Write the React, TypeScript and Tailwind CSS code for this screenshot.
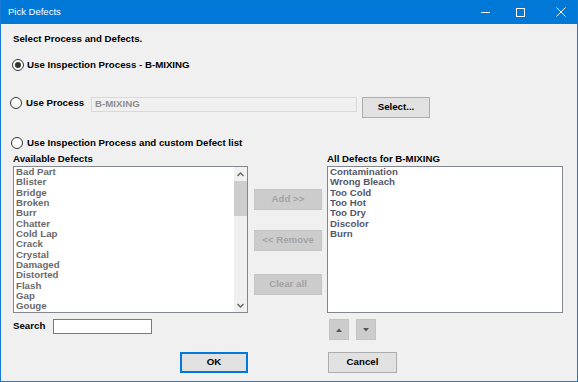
import { useState } from "react";

const AVAILABLE = [
  "Bad Part", "Blister", "Bridge", "Broken", "Burr", "Chatter", "Cold Lap",
  "Crack", "Crystal", "Damaged", "Distorted", "Flash", "Gap", "Gouge",
];

const SELECTED = ["Contamination", "Wrong Bleach", "Too Cold", "Too Hot", "Too Dry", "Discolor", "Burn"];

function Radio({ checked }: { checked?: boolean }) {
  return (
    <span className="flex h-[12px] w-[12px] shrink-0 items-center justify-center rounded-full border border-[#333] bg-white">
      {checked && <span className="h-[6px] w-[6px] rounded-full bg-[#333]" />}
    </span>
  );
}

function Btn({ label, className = "" }: { label: string; className?: string }) {
  return (
    <div className={`flex h-[21px] items-center justify-center border border-[#adadad] bg-[#e1e1e1] text-black ${className}`}>
      {label}
    </div>
  );
}

function DisabledBtn({ label }: { label: string }) {
  return (
    <div className="flex h-[21px] w-[68px] items-center justify-center border border-[#c4c4c4] bg-[#cccccc] text-[#a3a3a3]">
      {label}
    </div>
  );
}

export default function App() {
  const [mode] = useState(0);

  return (
    <div
      className="flex h-[382px] w-[578px] flex-col overflow-hidden border-x border-b border-[#1a79d4] bg-[#f0f0f0] text-[9.7px] font-bold text-black"
      style={{ fontFamily: '"Liberation Sans", Arial, sans-serif' }}
    >
      {/* Title bar */}
      <div className="-mx-px flex h-[24px] shrink-0 items-center bg-[#0078d7] text-white">
        <span className="ml-[8px] text-[9.5px] font-normal">Pick Defects</span>
        <div className="ml-auto flex h-full items-center">
          <div className="flex h-full w-[25px] items-center justify-center">
            <span className="h-px w-[9px] bg-white" />
          </div>
          <div className="flex h-full w-[45px] items-center justify-center">
            <span className="h-[9px] w-[9px] border border-white" />
          </div>
          <div className="flex h-full w-[35px] items-center justify-center">
            <svg width="10" height="10" viewBox="0 0 10 10">
              <path d="M0.5 0.5 L9.5 9.5 M9.5 0.5 L0.5 9.5" stroke="white" strokeWidth="1" />
            </svg>
          </div>
        </div>
      </div>

      <div className="flex flex-col pl-[12px]">
        <div className="mt-[8px] h-[13px] leading-[13px]">Select Process and Defects.</div>

        {/* Radio 1 */}
        <div className="-ml-px mt-[13px] flex h-[14px] items-center gap-[3px]">
          <Radio checked={mode === 0} />
          <span>Use Inspection Process - B-MIXING</span>
        </div>

        {/* Radio 2 */}
        <div className="mt-[24px] flex h-[21px] items-start">
          <div className="-ml-[3px] flex h-[14px] w-[81px] items-center gap-[4px]">
            <Radio checked={mode === 1} />
            <span>Use Process</span>
          </div>
          <div className="mt-px flex h-[15px] w-[266px] items-center border border-[#d9d9d9] bg-[#f0f0f0] pl-[3px] text-[#8d8d8d]">
            B-MIXING
          </div>
          <Btn label="Select..." className="ml-[5px] mt-px h-[20px] w-[68px]" />
        </div>

        {/* Radio 3 */}
        <div className="-ml-[2px] mt-[19px] flex h-[14px] items-center gap-[4px]">
          <Radio checked={mode === 2} />
          <span>Use Inspection Process and custom Defect list</span>
        </div>

        {/* Lists */}
        <div className="mt-[2px] flex items-start">
          <div className="flex w-[235px] flex-col">
            <div className="h-[13px] leading-[13px]">Available Defects</div>
            <div className="mt-px flex h-[147px] border border-[#828790] bg-white">
              <div className="flex-1 pl-[2px] text-[#6a6a6a]">
                {AVAILABLE.map((d) => (
                  <div key={d} className="h-[10.33px] leading-[10.33px]">{d}</div>
                ))}
              </div>
              <div className="flex w-[13px] flex-col bg-[#f0f0f0]">
                <div className="flex h-[14px] items-center justify-center">
                  <svg width="7" height="5" viewBox="0 0 7 5">
                    <path d="M0.5 4 L3.5 1 L6.5 4" stroke="#606060" strokeWidth="1.3" fill="none" />
                  </svg>
                </div>
                <div className="h-[35px] bg-[#cdcdcd]" />
                <div className="flex-1" />
                <div className="flex h-[14px] items-center justify-center">
                  <svg width="7" height="5" viewBox="0 0 7 5">
                    <path d="M0.5 1 L3.5 4 L6.5 1" stroke="#606060" strokeWidth="1.3" fill="none" />
                  </svg>
                </div>
              </div>
            </div>
            <div className="mt-[6px] flex h-[15px] items-center">
              <span className="w-[40px]">Search</span>
              <div className="h-[15px] w-[99px] border border-[#7a7a7a] bg-white" />
            </div>
          </div>

          <div className="ml-[6px] flex w-[68px] flex-col pt-[37px]">
            <DisabledBtn label="Add >>" />
            <div className="mt-[20px]"><DisabledBtn label="<< Remove" /></div>
            <div className="mt-[23px]"><DisabledBtn label="Clear all" /></div>
          </div>

          <div className="ml-[5px] flex w-[236px] flex-col">
            <div className="h-[13px] leading-[13px]">All Defects for B-MIXING</div>
            <div className="mt-px h-[147px] border border-[#828790] bg-white pl-[2px] text-[#55566a]">
              {SELECTED.map((d) => (
                <div key={d} className="h-[10.33px] leading-[10.33px]">{d}</div>
              ))}
            </div>
            <div className="ml-[2px] mt-[6px] flex gap-[7px]">
              <div className="flex h-[21px] w-[20px] items-center justify-center border border-[#c4c4c4] bg-[#cccccc]">
                <svg width="6" height="4" viewBox="0 0 6 4"><path d="M0 4 L3 0.5 L6 4 Z" fill="#555" /></svg>
              </div>
              <div className="flex h-[21px] w-[20px] items-center justify-center border border-[#c4c4c4] bg-[#cccccc]">
                <svg width="6" height="4" viewBox="0 0 6 4"><path d="M0 0 L3 3.5 L6 0 Z" fill="#555" /></svg>
              </div>
            </div>
          </div>
        </div>

        {/* OK / Cancel */}
        <div className="mt-[12px] flex">
          <div className="ml-[167px] flex h-[21px] w-[68px] items-center justify-center border-2 border-[#0078d7] bg-[#e1e1e1]">OK</div>
          <Btn label="Cancel" className="ml-[80px] w-[69px]" />
        </div>
      </div>
    </div>
  );
}
